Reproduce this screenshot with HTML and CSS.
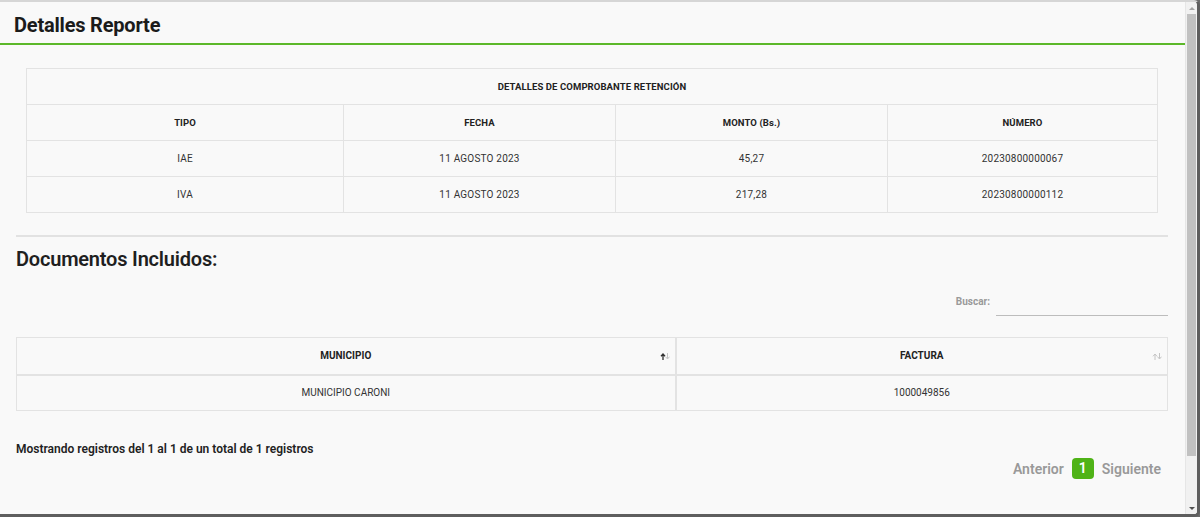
FILE: index.html
```html
<!DOCTYPE html>
<html lang="es">
<head>
<meta charset="utf-8">
<title>Detalles Reporte</title>
<link rel="stylesheet" href="styles.css">
</head>
<body>
<div class="frame">
  <div class="content">
    <header class="page-header">
      <h1 class="page-title">Detalles Reporte</h1>
    </header>

    <section class="summary">
      <table class="grid summary-table">
        <thead>
          <tr><th colspan="4" class="caption-cell">DETALLES DE COMPROBANTE RETENCIÓN</th></tr>
          <tr>
            <th class="c1">TIPO</th>
            <th class="c2">FECHA</th>
            <th class="c3">MONTO (Bs.)</th>
            <th class="c4">NÚMERO</th>
          </tr>
        </thead>
        <tbody>
          <tr><td>IAE</td><td>11 AGOSTO 2023</td><td>45,27</td><td>20230800000067</td></tr>
          <tr><td>IVA</td><td>11 AGOSTO 2023</td><td>217,28</td><td>20230800000112</td></tr>
        </tbody>
      </table>
    </section>

    <hr class="divider">

    <h2 class="section-title">Documentos Incluidos:</h2>

    <div class="search-row">
      <label class="search-label" for="buscar">Buscar:</label>
      <input class="search-input" id="buscar" type="text">
    </div>

    <table class="docs-table">
      <thead>
        <tr>
          <th class="col-mun"><span>MUNICIPIO</span>
            <svg class="sort" width="10" height="7" viewBox="0 0 10 7"><path d="M3 7V1.5M1 3.3L3 1l2 2.3" fill="none" stroke="#333" stroke-width="1.3"/><path d="M7.5 0v5.5M5.5 3.7l2 2.3 2-2.3" fill="none" stroke="#c4c4c4" stroke-width="1"/></svg>
          </th>
          <th class="col-fac"><span>FACTURA</span>
            <svg class="sort" width="10" height="7" viewBox="0 0 10 7"><path d="M3 7V1.5M1 3.3L3 1l2 2.3" fill="none" stroke="#c4c4c4" stroke-width="1"/><path d="M7.5 0v5.5M5.5 3.7l2 2.3 2-2.3" fill="none" stroke="#c4c4c4" stroke-width="1"/></svg>
          </th>
        </tr>
      </thead>
      <tbody>
        <tr><td class="col-mun">MUNICIPIO CARONI</td><td class="col-fac">1000049856</td></tr>
      </tbody>
    </table>

    <p class="info">Mostrando registros del 1 al 1 de un total de 1 registros</p>

    <nav class="pager">
      <span class="pg-link">Anterior</span>
      <span class="pg-current">1</span>
      <span class="pg-link">Siguiente</span>
    </nav>
  </div>
  <div class="scrollbar">
    <div class="sb-arrow sb-up"></div>
    <div class="sb-track"><div class="sb-thumb"></div></div>
    <div class="sb-arrow sb-down"></div>
  </div>
</div>
</body>
</html>
```

FILE: styles.css
```css
* { box-sizing: border-box; }
html, body { margin: 0; padding: 0; }
body {
  background: #6a6a6a;
  font-family: Roboto, "Liberation Sans", sans-serif;
  color: #222;
  width: 1200px;
  height: 517px;
  overflow: hidden;
}
.frame {
  display: flex;
  height: 517px;
  background: #f9f9f9;
  border-top: 2px solid #d6d6d6;
  border-right: 3px solid #5e5e5e;
  border-bottom: 3px solid #5e5e5e;
  border-radius: 0 6px 6px 0;
  overflow: hidden;
}
.content {
  flex: 1;
  min-width: 0;
}
.page-header {
  height: 43px;
  border-bottom: 2px solid #5cb82a;
  padding: 10px 14px 0;
}
.page-title {
  margin: 0;
  font-size: 20px;
  line-height: 26px;
  font-weight: 700;
  color: #1b1b1b;
  letter-spacing: -0.2px;
}
.summary {
  padding: 23px 27px 0 26px;
}
.grid {
  width: 100%;
  border-collapse: collapse;
  font-size: 10px;
}
.grid th, .grid td {
  border: 1px solid #e3e3e3;
  height: 36px;
  text-align: center;
  padding: 0;
  color: #333;
}
.grid th { font-weight: 700; color: #222; font-size: 9.5px; letter-spacing: 0.1px; }
.grid td { font-weight: 400; color: #333; letter-spacing: 0.2px; }
.c1 { width: 317px; }
.c2 { width: 272px; }
.c3 { width: 272px; }
.divider {
  margin: 22px 17px 0 16px;
  border: 0;
  border-top: 2px solid #e2e2e2;
  height: 0;
}
.section-title {
  margin: 10px 0 0 16px;
  font-size: 20px;
  line-height: 24px;
  font-weight: 600;
  color: #1f1f1f;
  letter-spacing: -0.2px;
}
.search-row {
  display: flex;
  justify-content: flex-end;
  align-items: flex-start;
  margin: 20px 17px 0 0;
  height: 46px;
}
.search-label {
  font-size: 10px;
  font-weight: 700;
  color: #9a9a9a;
  line-height: 16px;
  margin-top: 3px;
  margin-right: 6px;
}
.search-input {
  width: 172px;
  height: 25px;
  border: 0;
  border-bottom: 1px solid #bdbdbd;
  background: transparent;
  outline: none;
}
.docs-table {
  margin: 0 17px 0 16px;
  width: calc(100% - 33px);
  border-collapse: collapse;
  font-size: 10px;
}
.docs-table th, .docs-table td {
  border: 1px solid #e3e3e3;
  text-align: center;
  padding: 0;
}
.docs-table th {
  position: relative;
  height: 37px;
  font-weight: 700;
  color: #222;
  border-bottom-width: 2px;
}
.docs-table td { color: #333; height: 36px; }
.docs-table .col-mun { width: 659px; border-right-width: 2px; }
.sort {
  position: absolute;
  right: 5px;
  top: 15px;
  display: block;
}
.info {
  margin: 30px 0 0 16px;
  font-size: 12px;
  font-weight: 600;
  color: #222;
  line-height: 16px;
}
.pager {
  display: flex;
  justify-content: flex-end;
  align-items: center;
  gap: 8px;
  margin: 1px 24px 0 0;
  font-size: 14px;
  font-weight: 600;
  color: #999;
}
.pg-current {
  background: #4fb317;
  color: #fff;
  border-radius: 4px;
  width: 22px;
  height: 21px;
  line-height: 21px;
  text-align: center;
}
.scrollbar {
  width: 12px;
  display: flex;
  flex-direction: column;
  background: #f1f1f1;
  border-left: 1px solid #e6e6e6;
}
.sb-arrow {
  height: 12px;
  display: flex;
  align-items: center;
  justify-content: center;
}
.sb-up::before {
  content: "";
  border-left: 3px solid transparent;
  border-right: 3px solid transparent;
  border-bottom: 3px solid #a3a3a3;
}
.sb-down::before {
  content: "";
  border-left: 3px solid transparent;
  border-right: 3px solid transparent;
  border-top: 3px solid #505050;
}
.sb-track {
  flex: 1;
  padding: 0 1px;
}
.sb-thumb {
  height: 442px;
  background: #c1c1c1;
}
```
